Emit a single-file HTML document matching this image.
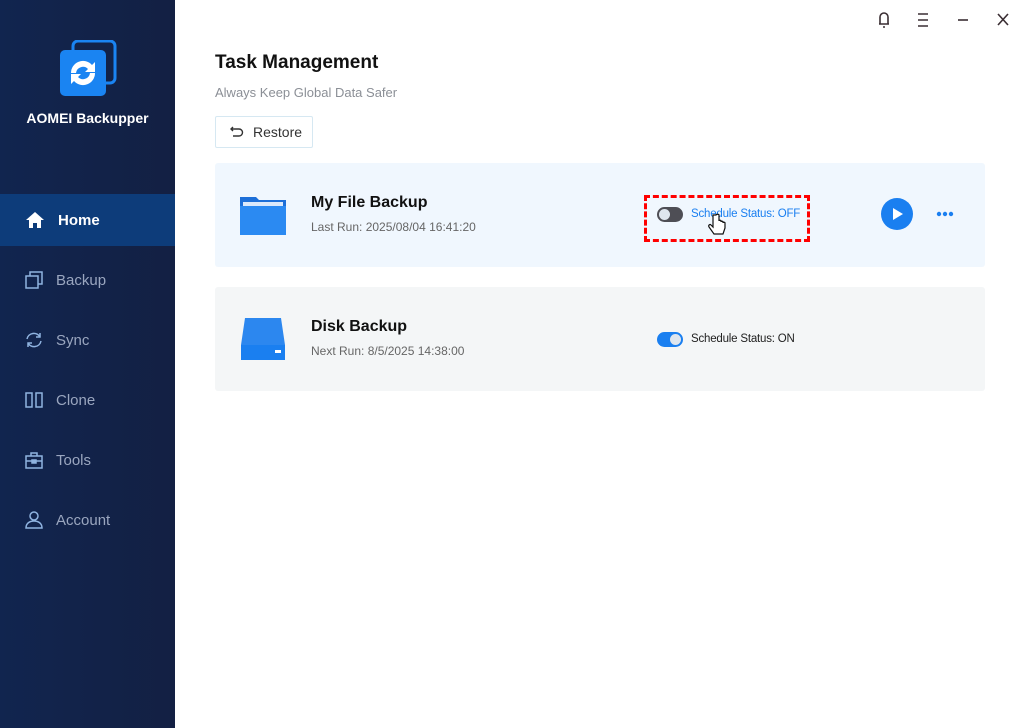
<!DOCTYPE html>
<html><head><meta charset="utf-8"><style>
*{margin:0;padding:0;box-sizing:border-box}
body{width:1025px;height:728px;overflow:hidden;background:#fff;font-family:"Liberation Sans",sans-serif;position:relative}
.sb{position:absolute;left:0;top:0;width:175px;height:728px;background:linear-gradient(90deg,#11254f,#132043)}
.logo{position:absolute;left:60px;top:40px}
.brand{position:absolute;left:0;width:175px;top:110px;text-align:center;color:#fff;font-weight:bold;font-size:14px}
.nav{position:absolute;left:0;width:175px;height:52px;display:flex;align-items:center;padding-left:25px;color:#9aa6bf;font-size:15px}
.nav svg{margin-right:13px}
.nav.act{background:#0d3c7a;color:#fff;font-weight:bold}
.t{position:absolute;color:#222}
.card{position:absolute;left:215px;width:770px;height:104px;border-radius:3px}
.btnr{position:absolute;left:215px;top:116px;width:98px;height:32px;border:1px solid #d6e8f2;border-radius:2px;font-size:14px;color:#333;display:flex;align-items:center;padding-left:14px}
</style></head><body>
<div class="sb">
<svg class="logo" width="58" height="58" viewBox="0 0 58 58"><rect x="13" y="1" width="42" height="42" rx="5" fill="none" stroke="#1a84f2" stroke-width="3"/><rect x="0" y="10" width="46" height="46" rx="5" fill="#1a84f2"/><path d="M11 33a12 12 0 0 1 21-8l3-3v10h-10l3-3a7 7 0 0 0-12 4z M35 33a12 12 0 0 1-21 8l-3 3v-10h10l-3 3a7 7 0 0 0 12-4z" fill="#fff"/></svg>
<div class="brand">AOMEI Backupper</div>
<div class="nav act" style="top:194px"><svg width="20" height="18" viewBox="0 0 20 18"><path d="M10 1L1 9h3v8h4v-5h4v5h4V9h3z" fill="#fff"/></svg>Home</div>
<div class="nav" style="top:254px"><svg width="18" height="18" viewBox="0 0 18 18" fill="none" stroke="#8fb3e0" stroke-width="1.5"><rect x="1" y="5" width="12" height="12"/><path d="M5 5V1h12v12h-4"/></svg>Backup</div>
<div class="nav" style="top:314px"><svg width="18" height="18" viewBox="0 0 18 18" fill="none" stroke="#8fb3e0" stroke-width="1.5"><path d="M2 8a7 7 0 0 1 13-2M16 10a7 7 0 0 1-13 2M15 2v4h-4M3 16v-4h4"/></svg>Sync</div>
<div class="nav" style="top:374px"><svg width="18" height="18" viewBox="0 0 18 18" fill="none" stroke="#8fb3e0" stroke-width="1.5"><rect x="1" y="2" width="6" height="14"/><rect x="11" y="2" width="6" height="14"/></svg>Clone</div>
<div class="nav" style="top:434px"><svg width="18" height="18" viewBox="0 0 18 18" fill="none" stroke="#8fb3e0" stroke-width="1.5"><rect x="1" y="5" width="16" height="12"/><path d="M6 5V2h6v3M1 10h16"/><rect x="7" y="9" width="4" height="3" fill="#8fb3e0"/></svg>Tools</div>
<div class="nav" style="top:494px"><svg width="18" height="18" viewBox="0 0 18 18" fill="none" stroke="#8fb3e0" stroke-width="1.5"><circle cx="9" cy="5" r="4"/><path d="M1 17c0-5 4-7 8-7s8 2 8 7z"/></svg>Account</div>
</div>
<svg style="position:absolute;left:876px;top:11px" width="140" height="18" viewBox="0 0 140 18" fill="none" stroke="#3a2e33" stroke-width="1.6"><path d="M3 13h10M4 13V6a4 4 0 0 1 8 0v7M7 16h2"/><path d="M42 3h10M42 9h10M42 15h10"/><path d="M82 9h10"/><path d="M122 3l10 11M132 3l-10 11"/></svg>
<div class="t" style="left:215px;top:52px;font-size:19px;font-weight:bold;color:#111">Task Management</div>
<div class="t" style="left:215px;top:85px;font-size:13px;color:#8b8f96">Always Keep Global Data Safer</div>
<div class="btnr"><svg width="14" height="12" viewBox="0 0 14 12" fill="none" stroke="#333" stroke-width="1.4" style="margin-right:9px"><path d="M3 1L1 3l2 2M1 3h8a3.5 3.5 0 0 1 0 7H3"/></svg>Restore</div>
<div class="card" style="top:163px;background:#f0f7fe"></div>
<div class="card" style="top:287px;background:#f4f6f7"></div>
<svg style="position:absolute;left:240px;top:195px" width="46" height="40" viewBox="0 0 46 40"><path d="M0 2h16l3 3h27v35H0z" fill="#1d6fd8"/><rect x="3" y="7" width="40" height="4" fill="#dbe9fb"/><rect x="0" y="11" width="46" height="29" fill="#2b8af2"/></svg>
<svg style="position:absolute;left:241px;top:318px" width="44" height="42" viewBox="0 0 44 42"><path d="M4 0h36l4 27H0z" fill="#2c87ef"/><rect x="0" y="27" width="44" height="15" fill="#1a7ff0"/><rect x="34" y="32" width="6" height="3" fill="#fff"/></svg>
<div class="t" style="left:311px;top:194px;font-size:16px;font-weight:bold;color:#111">My File Backup</div>
<div class="t" style="left:311px;top:220px;font-size:12px;color:#666">Last Run: 2025/08/04 16:41:20</div>
<div class="t" style="left:311px;top:318px;font-size:16px;font-weight:bold;color:#111">Disk Backup</div>
<div class="t" style="left:311px;top:344px;font-size:12px;color:#666">Next Run: 8/5/2025 14:38:00</div>
<div style="position:absolute;left:644px;top:195px;width:166px;height:47px;border:3px dashed #f00"></div>
<div style="position:absolute;left:657px;top:207px;width:26px;height:15px;border-radius:8px;background:#4e4e55"><div style="position:absolute;left:2px;top:2px;width:11px;height:11px;border-radius:50%;background:#dfe6ee"></div></div>
<div class="t" style="left:691px;top:208px;font-size:11.5px;color:#1a7ff0;letter-spacing:-0.2px">Schedule Status: OFF</div>
<div style="position:absolute;left:657px;top:332px;width:26px;height:15px;border-radius:8px;background:#1a7ff0"><div style="position:absolute;left:13px;top:2px;width:11px;height:11px;border-radius:50%;background:#dfe6ee"></div></div>
<div class="t" style="left:691px;top:333px;font-size:11.5px;color:#222;letter-spacing:-0.2px">Schedule Status: ON</div>
<svg style="position:absolute;left:708px;top:213px" width="20" height="24" viewBox="0 0 20 24"><path d="M5 2v12l-2-2c-1-1-3 0-2 2l5 7h9l2-6V10c0-1-2-1-2 0V9c0-1-2-1-2 0V8c0-1-2-1-2 0V2c0-1-3-1-3 0z" fill="#fff" stroke="#111" stroke-width="1.2"/></svg>
<div style="position:absolute;left:881px;top:198px;width:32px;height:32px;border-radius:50%;background:#1a7ff0"></div>
<svg style="position:absolute;left:892px;top:207px" width="12" height="14"><path d="M1 1l10 6-10 6z" fill="#fff"/></svg>
<svg style="position:absolute;left:936px;top:211px" width="20" height="6"><circle cx="3" cy="3" r="2.2" fill="#1a7ff0"/><circle cx="9" cy="3" r="2.2" fill="#1a7ff0"/><circle cx="15" cy="3" r="2.2" fill="#1a7ff0"/></svg>
</body></html>
